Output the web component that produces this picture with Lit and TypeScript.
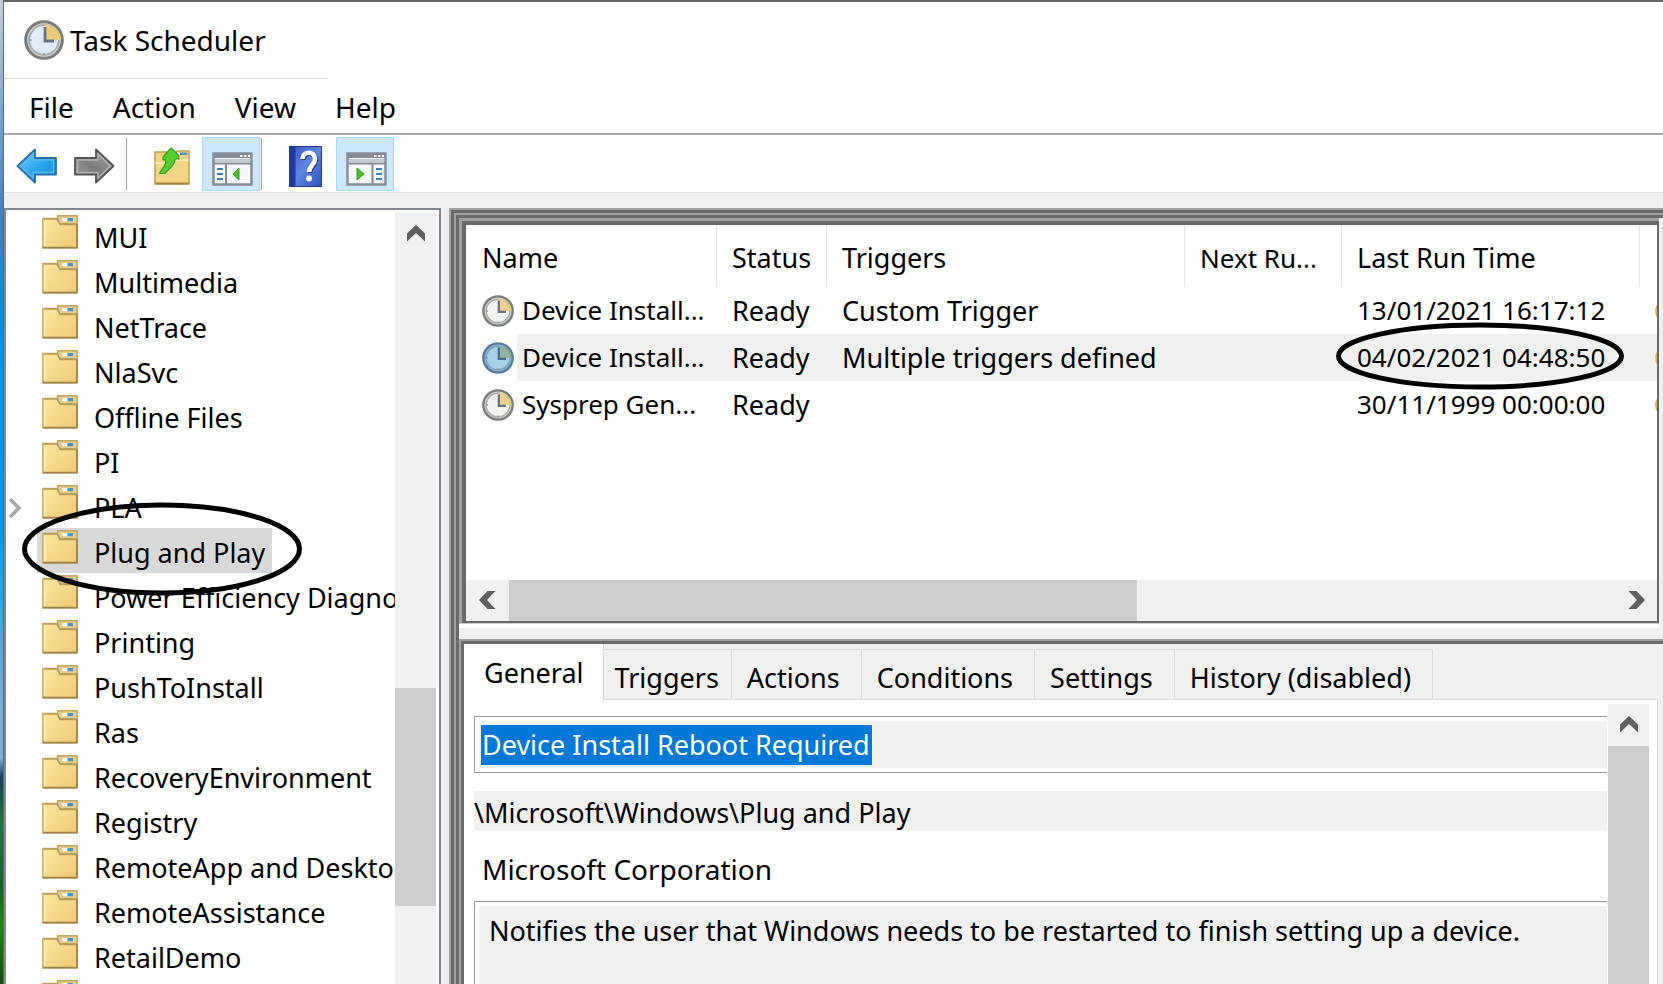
import { LitElement, html, css, svg } from "lit";
import { customElement, property, state } from "lit/decorators.js";
import { classMap } from "lit/directives/class-map.js";

const folderIcon = html`<svg class="folder" width="36" height="34" viewBox="0 0 36 34" aria-hidden="true">
  <defs>
    <linearGradient id="f" x1="0" y1="0" x2="1" y2="1">
      <stop offset="0" stop-color="#fde9a0" /><stop offset="1" stop-color="#efc978" />
    </linearGradient>
  </defs>
  <path d="M.8 3.4H16V.8h19v31.9H.8z" fill="url(#f)" stroke="#c5a860" stroke-width="1.4" />
  <path d="M15.600.8H35v7.800H17.800l-2.200-3z" fill="#e3cd90" stroke="#c0a45e" stroke-width="1.200" />
  <path d="M2 4h13.500l2.500 5.500H34" fill="none" stroke="#b59a5a" stroke-width="1.400" />
  <path d="M2.800 6v25" stroke="#fff0b8" stroke-width="1.400" />
  <path d="M20.500 3h5v3.200h-5z" fill="#fff" /><path d="M25.500 3H31v3.200h-5.500z" fill="#4c93c4" />
  <path d="M1 32.600h34.500M35 9v24" fill="none" stroke="#9c8249" stroke-width="1.700" />
</svg>`;

const clockIcon = (size: number, tone: string) => {
  const blue = tone === "blue";
  return html`<svg class="clock" width=${size} height=${size} viewBox="0 0 40 40" aria-hidden="true">
    <circle cx="20" cy="20" r="18.300" fill=${blue ? "#8fb6d4" : "#d4d4d1"} stroke=${blue ? "#557c9a" : "#7b7b79"} stroke-width="3" />
    <circle cx="20" cy="20" r="14.800" fill=${blue ? "#a9cfe9" : tone === "title" ? "#dfebf6" : "#f3f3f1"} stroke=${blue ? "#7aa3c1" : "#a9adb0"} stroke-width="1.800" />
    <path d="M20.500 20V4.500A15.500 15.500 0 0 1 35.500 20z" fill=${blue ? "#92b5a3" : tone === "title" ? "#ecca7c" : "#f0cf92"} />
    <path d="M29 7.500l6 6.500 1 6" fill="none" stroke=${blue ? "#86b08a" : "#d9cf72"} stroke-width="2.500" />
    <path d="M21 7v14h9" fill="none" stroke=${blue ? "#466f8d" : "#667480"} stroke-width="2.800" />
    <path d="M20 33v2.500M5 20h2.500" stroke="#8b98a2" stroke-width="1.600" />
  </svg>`;
};

const arrowIcon = (forward: boolean) => {
  const id = forward ? "grey-arrow" : "blue-arrow";
  return html`<svg width="42" height="36" viewBox="0 0 42 36" aria-hidden="true">
  <defs>
    <linearGradient id=${id} x1="0" y1="0" x2="1" y2="1">
      <stop offset="0" stop-color=${forward ? "#a2a2a2" : "#7fd0f8"} />
      <stop offset=".55" stop-color=${forward ? "#7d7d7d" : "#2ba4ec"} />
      <stop offset="1" stop-color=${forward ? "#a8a8a8" : "#1684d8"} />
    </linearGradient>
  </defs>
  <g transform=${forward ? "matrix(-1 0 0 1 42 0)" : "matrix(1 0 0 1 0 0)"}>
    <path d="M1.500 18 19 1.500V10h21v16.500H19v8z" fill="url(#${id})" stroke=${forward ? "#565656" : "#2b6da6"} stroke-width="1.800" stroke-linejoin="round" />
    <path d="M4.500 18 17 6v6h20.500v12.500H17V30z" fill="none" stroke=${forward ? "#b5b5b5" : "#56bdf5"} stroke-width="1.300" />
  </g>
</svg>`;
};

const upFolderIcon = html`<svg width="36" height="38" viewBox="0 0 36 38" aria-hidden="true">
  <path d="M1 5h21l2-1h11v33H1z" fill="#f3d586" stroke="#bf9f55" stroke-width="1.500" />
  <path d="M19 12 23 7h11" fill="none" stroke="#caa95c" stroke-width="1.300" />
  <path d="M25 5.500h8v2.500h-8z" fill="#4c93c4" /><path d="M23 5.500h3v2.500h-3z" fill="#fff" />
  <path d="M1 16h16l3-3h15" fill="none" stroke="#fff0bd" stroke-width="1.500" />
  <path d="M1.500 36.500h33.500" stroke="#a5853f" stroke-width="1.800" />
  <path d="M5.500 26.500c2-5 6.500-7 6.500-13.500H9c-.5-2 .5-4 2.500-6L17 1l5.500 5c1.800 2 2.500 4 2.500 6h-4c0 7-6.500 9.500-10 14.500z" fill="#58cb2e" stroke="#36a122" stroke-width="1.200" stroke-linejoin="round" />
</svg>`;

const paneIcon = (right: boolean) => html`<svg width="41" height="34" viewBox="0 0 41 34" aria-hidden="true">
  <path d="M1.500 1.500h38v31h-38z" fill="#f5f7f8" stroke="#858c96" stroke-width="2.400" />
  <path d="M1 1h39v5H1z" fill="#858c96" /><path d="M3 7h35v3H3z" fill="#c5cbd3" />
  <path d="M2 11.500h37" stroke="#858c96" stroke-width="1.800" />
  <path d="M28 3h2.500v2H28zM32 3h2.500v2H32zM36 3h2v2h-2z" fill="#fff" />
  ${right
    ? svg`<path d="M26.500 12v20" stroke="#858c96" stroke-width="2"/><path d="M30 17h6M30 22h6M30 27h6" stroke="#3b82c4" stroke-width="2"/><path d="M11 16l7 6-7 6z" fill="#4fbb32" stroke="#36a122"/>`
    : svg`<path d="M14 12v20" stroke="#858c96" stroke-width="2"/><path d="M5 17h6M5 22h6M5 27h6" stroke="#3b82c4" stroke-width="2"/><path d="M27 16l-6 6 6 6z" fill="#4fbb32" stroke="#36a122"/>`}
</svg>`;

const helpIcon = html`<svg width="33" height="41" viewBox="0 0 33 41" aria-hidden="true">
  <defs>
    <linearGradient id="h" x1="0" y1="0" x2="1" y2="1">
      <stop offset="0" stop-color="#3454bd" /><stop offset=".5" stop-color="#5f86e0" /><stop offset="1" stop-color="#2f4fbe" />
    </linearGradient>
  </defs>
  <path d="M.5.5h32v40H.5z" fill="url(#h)" stroke="#23398f" />
  <path d="M0 0h6.500v41H0z" fill="#20389c" />
  <path d="M13.500 13c0-8.500 12.500-8.500 12.500 0 0 6-6 6.500-6 13" transform="translate(1 1)" fill="none" stroke="#2a3f8a" stroke-width="4.500" />
  <path d="M13.500 13c0-8.500 12.500-8.500 12.500 0 0 6-6 6.500-6 13" fill="none" stroke="#fff" stroke-width="4.500" />
  <circle cx="20" cy="32.500" r="2.900" fill="#fff" />
</svg>`;

const chevron = (dir: string) => {
  const turn = { up: 0, right: 90, down: 180, left: 270 }[dir];
  return html`<svg width="18" height="18" viewBox="0 0 18 18" aria-hidden="true">
    <path transform="rotate(${turn} 9 9)" d="M0 9.500 9 1l9 8.500v8l-9-8.500-9 8.500z" fill="#606060" />
  </svg>`;
};

@customElement("mmc-tree")
class MmcTree extends LitElement {
  @property({ type: Array }) items: string[] = [];
  @property() selected = "";

  static styles = css`
    :host { display: flex; min-height: 0; overflow: hidden; background: #fff; border: 2px solid #828790; border-bottom: 0; }
    .tree { flex: 1; min-width: 0; overflow: hidden; margin: 0; padding: 3px 0 0; list-style: none; }
    .item { display: flex; align-items: flex-start; height: 45px; padding-left: 3px; }
    .twist { display: flex; align-items: center; width: 28px; height: 50px; flex: none; }
    .node { display: flex; align-items: flex-start; height: 45px; padding: 0 7px 0 5px; border: 0; background: none; font: inherit; color: #000; white-space: nowrap; }
    .node.on { background: #d9d9d9; }
    .folder { flex: none; margin: 2px 16px 0 0; }
    .label { line-height: 49px; }
    .bar { flex: none; width: 41px; margin: 2px 3px 0 0; background: #f0f0f0; display: grid; grid-template-rows: 42px 433fr 218fr 78fr; }
    .arrow { border: 0; padding: 0; background: none; display: grid; place-items: center; }
    .thumb { grid-row: 3; background: #cdcdcd; }
  `;

  render() {
    return html`
      <ul class="tree">
        ${this.items.map((name) => html`<li class="item">
          <span class="twist">${name === "PLA"
            ? html`<svg width="14" height="20" viewBox="0 0 14 20"><path d="M1 1l9 9-9 9" fill="none" stroke="#a6a6a6" stroke-width="3.500" /></svg>`
            : ""}</span>
          <button class=${classMap({ node: true, on: name === this.selected })}
            @click=${() => (this.selected = name)}>${folderIcon}<span class="label">${name}</span></button>
        </li>`)}
      </ul>
      <div class="bar"><button class="arrow" aria-label="Scroll up">${chevron("up")}</button><div class="thumb"></div></div>
    `;
  }
}

@customElement("mmc-tasks")
class MmcTasks extends LitElement {
  @state() selected = 1;

  static tasks = [
    ["Device Install...", "Ready", "Custom Trigger", "", "13/01/2021 16:17:12"],
    ["Device Install...", "Ready", "Multiple triggers defined", "", "04/02/2021 04:48:50"],
    ["Sysprep Gen...", "Ready", "", "", "30/11/1999 00:00:00"],
  ];

  static styles = css`
    :host { display: flex; flex-direction: column; background: #fff; min-width: 0; overflow: hidden; }
    .wrap { flex: 1; min-height: 0; overflow: hidden; }
    table { width: 100%; table-layout: fixed; border-collapse: separate; border-spacing: 0; }
    .c0 { width: 251px; } .c1 { width: 110px; } .c2 { width: 358px; } .c3 { width: 157px; } .c4 { width: 298px; }
    th, td { padding: 0 0 0 15px; text-align: left; font-weight: 400; white-space: nowrap; overflow: hidden; }
    th:first-child, td:first-child { padding-left: 16px; }
    th { height: 62px; line-height: 56px; border-right: 1px solid #e5e5e5; padding-top: 4px; box-sizing: border-box; }
    th:last-child { border: 0; }
    td { height: 47px; line-height: 47px; }
    td:first-child, td:nth-child(5), th:nth-child(4) { font-size: 26px; }
    .on td { background: linear-gradient(#f0f0f0, #f0f0f0) no-repeat; }
    .on td:first-child { background-position: 51px 0; }
    .name { display: flex; align-items: center; gap: 8px; }
    .clock { flex: none; }
    .call { position: relative; overflow: visible; }
    .ring { position: absolute; left: -6px; top: -12px; z-index: 1; pointer-events: none; }
    .dot { display: block; box-sizing: border-box; width: 16px; height: 20px; border: 2px solid #e0b45f; border-radius: 50%; }
    .bar { display: grid; grid-template-columns: 43px 627fr 478fr 41px; height: 41px; background: #f0f0f0; }
    .arrow { border: 0; padding: 0 2px 2px 0; background: none; display: grid; place-items: center; }
    .thumb { background: #cdcdcd; }
    .arrow.right { grid-column: 4; padding: 0 0 2px; }
  `;

  render() {
    return html`
      <div class="wrap">
        <table>
          <colgroup><col class="c0" /><col class="c1" /><col class="c2" /><col class="c3" /><col class="c4" /><col /></colgroup>
          <thead><tr><th>Name</th><th>Status</th><th>Triggers</th><th>Next Ru...</th><th>Last Run Time</th><th></th></tr></thead>
          <tbody>
            ${MmcTasks.tasks.map((row, r) => html`<tr class=${r === this.selected ? "on" : ""} @click=${() => (this.selected = r)}>
              ${row.map((cell, c) => html`<td class=${r === 1 && c === 4 ? "call" : ""}>${c === 0
                ? html`<span class="name">${clockIcon(32, r === this.selected ? "blue" : "grey")}<span>${cell}</span></span>`
                : cell}${r === 1 && c === 4
                ? html`<svg class="ring" width="288" height="68" viewBox="0 0 288 68"><ellipse cx="144" cy="34" rx="141.500" ry="31" fill="none" stroke="#000" stroke-width="5" /></svg>`
                : ""}</td>`)}
              <td><span class="dot"></span></td>
            </tr>`)}
          </tbody>
        </table>
      </div>
      <div class="bar">
        <button class="arrow" aria-label="Scroll left">${chevron("left")}</button>
        <div class="thumb"></div>
        <button class="arrow right" aria-label="Scroll right">${chevron("right")}</button>
      </div>
    `;
  }
}

@customElement("mmc-details")
class MmcDetails extends LitElement {
  @state() tab = "General";

  static styles = css`
    :host { display: flex; flex-direction: column; background: #f0f0f0; min-width: 0; min-height: 0; overflow: hidden; }
    .tabs { display: flex; align-items: flex-end; height: 55px; flex: none; }
    .tab { height: 50px; padding: 0 21px 0 15px; border: 1px solid #dcdcdc; border-width: 1px 1px 0 0; background: #f0f0f0; font: inherit; line-height: 56px; color: #000; white-space: nowrap; overflow: hidden; }
    .tab.on { height: 58px; margin-bottom: -3px; padding: 0 19px 0 20px; background: #fff; border-top: 0; z-index: 1; }
    .tab.slim { padding: 0 12px 0 11px; }
    .body { flex: 1; display: flex; min-height: 0; overflow: hidden; margin-right: 5px; padding: 4px 8px 0 10px; background: #fff; border: 1px solid #dcdcdc; border-width: 1px 1px 0 0; }
    .form { flex: 1; min-width: 0; min-height: 0; display: flex; flex-direction: column; padding-top: 12px; }
    .box { flex: none; border: 1px solid #9a9a9a; border-right: 0; padding: 4px 0 4px 4px; background: #fff; }
    .fill { display: flex; height: 47px; align-items: center; background: #f0f0f0; padding-left: 2px; }
    .pick { background: #0078d7; color: #fff; line-height: 40px; padding: 0 2px 0 1px; }
    .path, .author { flex: none; box-sizing: border-box; }
    .path { margin-top: 18px; height: 40px; padding-top: 4px; line-height: 36px; background: #f0f0f0; }
    .author { height: 70px; padding: 18px 0 0 8px; line-height: 40px; font-size: 28px; }
    .box.note { flex: 1; min-height: 0; border-bottom: 0; padding-bottom: 0; display: flex; }
    .text { flex: 1; min-width: 0; font: inherit; line-height: 49px; border: 0; padding: 0 0 0 10px; background: #f0f0f0; color: #000; resize: none; outline: 0; overflow: hidden; }
    .bar { width: 41px; margin-left: 1px; display: grid; grid-template-rows: 42px 1fr; background: #f0f0f0; }
    .arrow { border: 0; padding: 0 0 2px; background: none; display: grid; place-items: center; }
    .thumb { background: #cdcdcd; }
  `;

  render() {
    const tabs = ["General", "Triggers", "Actions", "Conditions", "Settings", "History (disabled)"];
    return html`
      <div class="tabs" role="tablist">
        ${tabs.map((t) => html`<button role="tab" aria-selected=${t === this.tab}
          class=${classMap({ tab: true, on: t === this.tab, slim: t === "Triggers" })}
          @click=${() => (this.tab = t)}>${t}</button>`)}
      </div>
      <div class="body">
        <div class="form">
          <div class="box"><div class="fill"><span class="pick">Device Install Reboot Required</span></div></div>
          <div class="path">\\Microsoft\\Windows\\Plug and Play</div>
          <div class="author">Microsoft Corporation</div>
          <div class="box note"><textarea class="text" readonly aria-label="Description" .value=${"Notifies the user that Windows needs to be restarted to finish setting up a device."}></textarea></div>
        </div>
        <div class="bar"><button class="arrow" aria-label="Scroll up">${chevron("up")}</button><div class="thumb"></div></div>
      </div>
    `;
  }
}

@customElement("app-root")
class AppRoot extends LitElement {
  static folders = ["MUI", "Multimedia", "NetTrace", "NlaSvc", "Offline Files", "PI", "PLA", "Plug and Play",
    "Power Efficiency Diagnostics", "Printing", "PushToInstall", "Ras", "RecoveryEnvironment", "Registry",
    "RemoteApp and Desktop Connections Update", "RemoteAssistance", "RetailDemo", "Servicing"];

  static styles = css`
    :host { display: block; height: 100vh; overflow: hidden; font: 27px/40px "Noto Sans", "Open Sans", sans-serif; color: #000;
      background: linear-gradient(#c3cfdb 0, #3d7fc0 22%, #0090d8 35%, #0c9adf 55%, #7fb0dd 72%, #7fb0dd 77%, #173f57 79%, #1f7a3a 84%, #14632a 90%, #1a8a14 94%, #124a10 100%) 0 0 / 3px 100% no-repeat, #666; }
    .window { height: 100%; box-sizing: border-box; margin-left: 3px; padding-top: 2px; display: flex; flex-direction: column; background: #f0f0f0; border-left: 1px solid #5d6a78; box-shadow: inset 0 2px #666; }
    .title { display: flex; align-items: center; gap: 6px; height: 76px; padding-left: 20px; background: #fff; }
    .title h1 { margin: 0; font: inherit; font-size: 28px; }
    .rule { width: 323px; height: 1px; background: #dcdcdc; }
    .top { background: #fff; }
    .menu { display: flex; gap: 39px; height: 54px; padding-left: 25px; border-bottom: 2px solid #a9abb0; }
    .menu button { border: 0; padding: 1px 0 0; background: none; font: inherit; font-size: 28px; color: #000; }
    .tools { display: flex; align-items: center; height: 56px; padding: 1px 0 0 12px; border-bottom: 1px solid #e3e3e3; }
    .tool { border: 0; padding: 4px 0 0; background: none; display: grid; place-items: center; height: 54px; }
    .tool.on { width: 58px; background: #cce8ff; box-shadow: inset 0 0 0 1px #a9d8fb; padding: 10px 0 0 2px; }
    .fwd { margin-left: 15px; }
    .line { width: 1px; height: 52px; background: #a0a0a0; }
    .line.a { margin: 0 27px 0 11px; }
    .line.b { margin: 0 27px 0 1px; }
    .up { margin-right: 12px; }
    .help { margin-right: 14px; }
    .panes { position: relative; flex: 1; min-height: 0; margin-top: 15px; display: grid; grid-template-columns: 437px minmax(0, 1fr); column-gap: 8px; }
    .work { min-height: 0; min-width: 0; display: flex; flex-direction: column; border-left: 2px solid #a0a0a0; border-top: 2px solid #a0a0a0; }
    .w2, .w3 { flex: 1; min-height: 0; display: flex; flex-direction: column; }
    .w2 { border-left: 3px solid #696969; border-top: 3px solid #696969; }
    .w3 { border-left: 2px solid #a0a0a0; border-top: 2px solid #a0a0a0; }
    .w4 { flex: 1; min-height: 0; display: grid; grid-template-rows: 405fr 345fr; row-gap: 16px; border-left: 3px solid #696969; border-top: 3px solid #696969; }
    .upper { display: flex; min-height: 0; margin-right: 4px; border: solid #a0a0a0; border-width: 3px 0 0 3px; box-shadow: 0 1px #d0d0d0, 0 5px #fff; }
    .upper mmc-tasks { flex: 1; border: solid #696969; border-width: 4px 2px 2px 4px; }
    .lower { display: flex; min-height: 0; border: solid #a0a0a0; border-width: 2px 0 0 2px; }
    .lower mmc-details { flex: 1; border: solid #696969; border-width: 3px 0 0 3px; }
    .ring { position: absolute; left: 17px; top: 294px; pointer-events: none; }
  `;

  render() {
    return html`
      <div class="window">
        <div class="top">
          <header class="title">${clockIcon(40, "title")}<h1>Task Scheduler</h1></header>
          <div class="rule"></div>
          <nav class="menu">${["File", "Action", "View", "Help"].map((m) => html`<button>${m}</button>`)}</nav>
          <div class="tools">
            <button class="tool" aria-label="Back">${arrowIcon(false)}</button>
            <button class="tool fwd" aria-label="Forward">${arrowIcon(true)}</button>
            <span class="line a"></span>
            <button class="tool up" aria-label="Up one level">${upFolderIcon}</button>
            <button class="tool on" aria-label="Show or hide console tree">${paneIcon(false)}</button>
            <span class="line b"></span>
            <button class="tool help" aria-label="Help">${helpIcon}</button>
            <button class="tool on" aria-label="Show or hide action pane">${paneIcon(true)}</button>
          </div>
        </div>
        <main class="panes">
          <mmc-tree .items=${AppRoot.folders} selected="Plug and Play"></mmc-tree>
          <div class="work"><div class="w2"><div class="w3"><div class="w4">
            <div class="upper"><mmc-tasks></mmc-tasks></div>
            <div class="lower"><mmc-details></mmc-details></div>
          </div></div></div></div>
          <svg class="ring" width="282" height="94" viewBox="0 0 282 94"><ellipse cx="141" cy="47" rx="137.500" ry="44" fill="none" stroke="#000" stroke-width="5" /></svg>
        </main>
      </div>
    `;
  }
}
